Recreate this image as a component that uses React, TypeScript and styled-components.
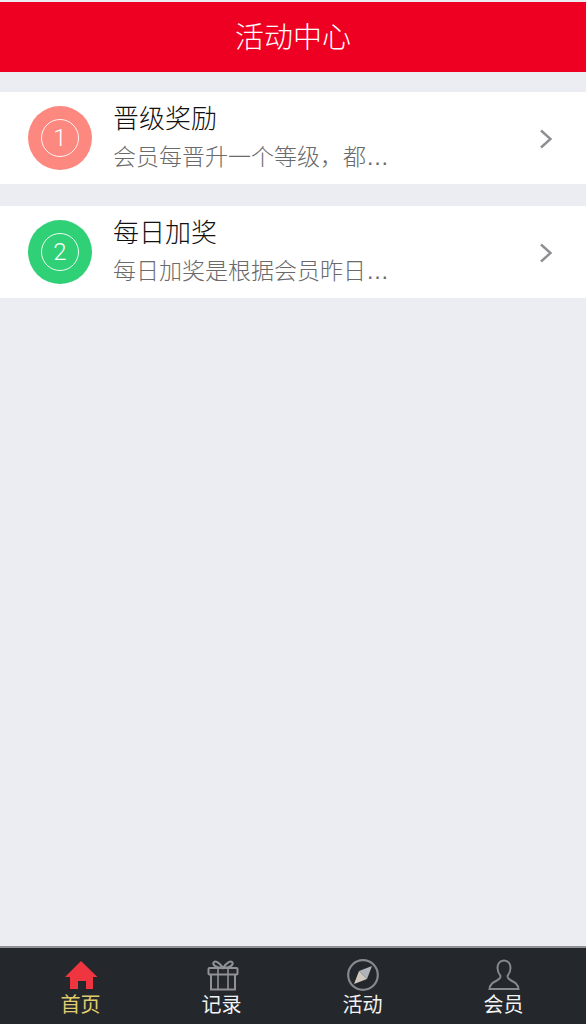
import React from 'react';
import styled, { createGlobalStyle } from 'styled-components';

const GlobalStyle = createGlobalStyle`
    html, body {
        margin: 0;
        padding: 0;
        background: #ecedf3;
    }
    body {
        font-family: "Liberation Sans", "Noto Sans CJK SC", sans-serif;
    }
`

type ActivityItemPropsType = {
    num: number
    color: string
    title: string
    desc: string
}

const activities: ActivityItemPropsType[] = [
    { num: 1, color: '#fc8880', title: '晋级奖励', desc: '会员每晋升一个等级，都…' },
    { num: 2, color: '#2fd076', title: '每日加奖', desc: '每日加奖是根据会员昨日…' },
];

const ActivityItem = (props: ActivityItemPropsType) => {
    return (
        <StyledItem>
            <StyledBadge $color={props.color}>
                <StyledBadgeRing>{props.num}</StyledBadgeRing>
            </StyledBadge>
            <StyledItemText>
                <StyledItemTitle>{props.title}</StyledItemTitle>
                <StyledItemDesc>{props.desc}</StyledItemDesc>
            </StyledItemText>
            <StyledChevron viewBox="0 0 14 20">
                <path d="M2 1.5 L11.5 10 L2 18.5" fill="none" stroke="#8e8e93" strokeWidth="2.4" />
            </StyledChevron>
        </StyledItem>
    );
};

const HomeIcon = () => (
    <StyledTabIcon viewBox="0 0 32 32">
        <path
            fill="#ee3540"
            d="M16 2 L32.5 18 L28 18 L28 30 L21 30 L21 22 L13 22 L13 30 L5 30 L5 18 L0 18 Z"
        />
    </StyledTabIcon>
);

const GiftIcon = () => (
    <StyledTabIcon viewBox="-1 0 32 32" fill="none" stroke="#8f9297" strokeWidth="2">
        <rect x="1.5" y="9" width="29" height="6.5" rx="1" />
        <path d="M4 15.5 V30.5 H28 V15.5" />
        <path d="M11 9 V30 M21 9 V30" strokeWidth="1.6" />
        <path d="M16 9 C12 3 8 1 6.5 3.5 C5.5 6 9 9 16 9 C23 9 26.5 6 25.5 3.5 C24 1 20 3 16 9 Z" />
    </StyledTabIcon>
);

const CompassIcon = () => (
    <StyledTabIcon viewBox="0 0 32 32">
        <circle cx="16" cy="16" r="14.8" fill="none" stroke="#85888c" strokeWidth="2.2" />
        <path d="M25 7 L20 20 L12 12 Z" fill="#aeb4ba" />
        <path d="M7 25 L12 12 L20 20 Z" fill="#cfcabd" />
    </StyledTabIcon>
);

const MemberIcon = () => (
    <StyledTabIcon viewBox="0 0 32 32" fill="none" stroke="#85888c" strokeWidth="2">
        <path d="M16 1.5 C11.5 1.5 9.5 5 9.5 9 C9.5 12.5 11 15 12.5 17 C12.8 19.5 11 20.5 8 22 C5 23.5 2 25 1.5 30 H30.5 C30 25 27 23.5 24 22 C21 20.5 19.2 19.5 19.5 17 C21 15 22.5 12.5 22.5 9 C22.5 5 20.5 1.5 16 1.5 Z" />
    </StyledTabIcon>
);

const App = () => {
    return (
        <StyledPage>
            <GlobalStyle />
            <StyledHeader>活动中心</StyledHeader>
            <StyledList>
                {activities.map((item) => (
                    <ActivityItem key={item.num} {...item} />
                ))}
            </StyledList>
            <StyledTabBar>
                <StyledTab $active><HomeIcon />首页</StyledTab>
                <StyledTab><GiftIcon />记录</StyledTab>
                <StyledTab><CompassIcon />活动</StyledTab>
                <StyledTab><MemberIcon />会员</StyledTab>
            </StyledTabBar>
        </StyledPage>
    );
};

export default App;

const StyledPage = styled.div`
    display: flex;
    flex-direction: column;
    width: 586px;
    height: 1024px;
    padding-top: 2px;
    box-sizing: border-box;
    background: #ecedf3;
    overflow: hidden;
`

const StyledHeader = styled.header`
    height: 70px;
    flex-shrink: 0;
    box-sizing: border-box;
    padding-bottom: 4px;
    display: flex;
    align-items: center;
    justify-content: center;
    background: #ee0022;
    color: #fff;
    font-size: 29px;
    font-weight: 300;
`

const StyledList = styled.ul`
    flex: 1;
    display: flex;
    flex-direction: column;
    gap: 22px;
    margin: 0;
    padding: 20px 0 0;
    list-style: none;
`

const StyledItem = styled.li`
    height: 92px;
    display: flex;
    align-items: center;
    padding: 0 33px 0 28px;
    background: #fff;
`

const StyledBadge = styled.div<{ $color: string }>`
    width: 64px;
    height: 64px;
    flex-shrink: 0;
    display: flex;
    align-items: center;
    justify-content: center;
    border-radius: 50%;
    background: ${(props) => props.$color};
`

const StyledBadgeRing = styled.div`
    width: 38px;
    height: 38px;
    box-sizing: border-box;
    display: flex;
    align-items: center;
    justify-content: center;
    border: 1.5px solid rgba(255, 255, 255, 0.9);
    border-radius: 50%;
    color: #fff;
    font-family: Roboto, sans-serif;
    font-size: 24px;
    font-weight: 300;
`

const StyledItemText = styled.div`
    flex: 1;
    min-width: 0;
    margin-left: 22px;
    padding-bottom: 1px;
`

const StyledItemTitle = styled.h3`
    margin: 0 0 0 -1px;
    font-size: 26px;
    font-weight: 300;
    line-height: 36px;
    color: #111;
`

const StyledItemDesc = styled.p`
    margin: 2px 0 0 -1px;
    font-size: 23px;
    font-weight: 300;
    line-height: 36px;
    color: #6a6a6a;
`

const StyledChevron = styled.svg`
    width: 14px;
    height: 20px;
    flex-shrink: 0;
    margin-top: 2px;
`

const StyledTabBar = styled.nav`
    height: 78px;
    flex-shrink: 0;
    display: grid;
    grid-template-columns: repeat(4, 141px);
    padding: 0 10px;
    box-sizing: border-box;
    border-top: 2px solid #8f9194;
    background: #24272c;
`

const StyledTab = styled.a<{ $active?: boolean }>`
    display: flex;
    flex-direction: column;
    align-items: center;
    padding-top: 11px;
    font-size: 20px;
    line-height: 24px;
    color: ${(props) => (props.$active ? '#e2cd6d' : '#f2f2f2')};
`

const StyledTabIcon = styled.svg`
    display: block;
    flex-shrink: 0;
    width: 32px;
    height: 32px;
    margin-bottom: 2px;
    overflow: visible;
`
